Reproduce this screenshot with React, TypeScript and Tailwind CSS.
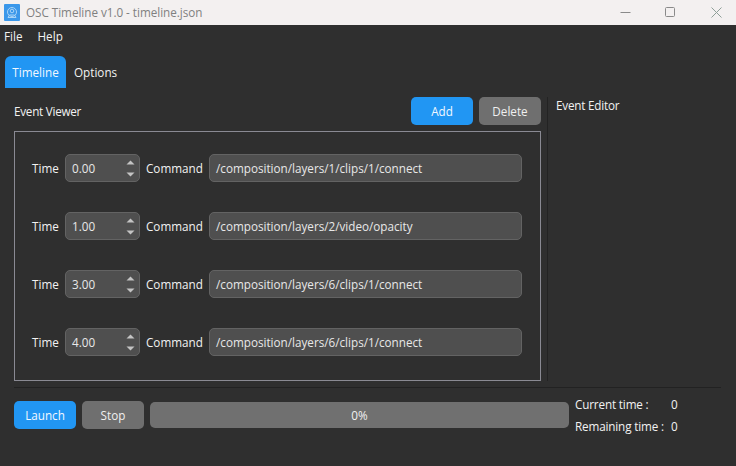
const events = [
  { time: "0.00", command: "/composition/layers/1/clips/1/connect" },
  { time: "1.00", command: "/composition/layers/2/video/opacity" },
  { time: "3.00", command: "/composition/layers/6/clips/1/connect" },
  { time: "4.00", command: "/composition/layers/6/clips/1/connect" },
];

const EventRow = ({ time, command }: { time: string; command: string }) => (
  <div className="flex h-[28px] items-center">
    <span className="mt-[2px] w-[33px]">Time</span>
    <div className="flex h-[28px] w-[75px] items-center justify-between rounded-[5px] border border-[#636363] bg-[#4f4f4f] pl-[6px] pr-[4px] text-[#e8e8e8]">
      <span className="mt-[2px]">{time}</span>
      <div className="flex flex-col gap-[7px]">
        <svg width="9" height="5" viewBox="0 0 9 5">
          <path d="M4.5 0.5 L8.5 4.5 H0.5 Z" fill="#c4c4c4" />
        </svg>
        <svg width="9" height="5" viewBox="0 0 9 5">
          <path d="M0.5 0.5 H8.5 L4.5 4.5 Z" fill="#c4c4c4" />
        </svg>
      </div>
    </div>
    <span className="ml-[6px] mt-[2px] w-[63px]">Command</span>
    <div className="flex h-[28px] w-[313px] items-center rounded-[5px] border border-[#636363] bg-[#4f4f4f] pl-[6px] text-[#e8e8e8]">
      <span className="mt-[2px]">{command}</span>
    </div>
  </div>
);

const ActionButton = ({ label, primary }: { label: string; primary?: boolean }) => (
  <button
    className={`flex h-[28px] w-[62px] items-center justify-center rounded-[5px] pt-[2px] ${
      primary ? "bg-[#2196f3] text-[#f2f8ff]" : "bg-[#6f6f6f] text-[#f0f0f0]"
    }`}
  >
    {label}
  </button>
);

export default function App() {
  return (
    <div
      className="flex h-[466px] w-[736px] flex-col overflow-hidden bg-[#2f2f2f] text-[11.7px] text-[#f2f2f2]"
      style={{ fontFamily: '"Open Sans", "Noto Sans", sans-serif' }}
    >
      {/* title bar */}
      <div className="flex h-[25px] items-center bg-[#f3f0f0] pl-[4px]">
        <div className="flex h-[17px] w-[16px] items-center justify-center rounded-[1px] bg-[#3a97ea]">
          <svg width="14" height="14" viewBox="0 0 14 14" fill="none" stroke="#a9d4f7" strokeWidth="1">
            <circle cx="7" cy="6" r="4.5" />
            <circle cx="7" cy="5" r="1.8" />
            <path d="M3 11.5 H11 L9.5 9 H4.5 Z" />
          </svg>
        </div>
        <span className="ml-[6px] tracking-[-0.03px] text-[#808080]">OSC Timeline v1.0 - timeline.json</span>
        <div className="ml-auto flex items-center">
          <svg width="11" height="11" viewBox="0 0 11 11" className="mr-[34px]">
            <path d="M0.5 5.5 H10.5" stroke="#8a8a8a" />
          </svg>
          <svg width="11" height="11" viewBox="0 0 11 11" className="mr-[35px]">
            <rect x="0.5" y="0.5" width="9" height="9" rx="1" fill="none" stroke="#8a8a8a" />
          </svg>
          <svg width="11" height="11" viewBox="0 0 11 11" className="mr-[14px]">
            <path d="M0.5 0.5 L10.5 10.5 M10.5 0.5 L0.5 10.5" stroke="#8f9f98" />
          </svg>
        </div>
      </div>

      {/* menu bar */}
      <div className="flex h-[24px] items-center gap-[15px] pl-[4px]">
        <span>File</span>
        <span>Help</span>
      </div>

      {/* tabs */}
      <div className="mt-[7px] flex h-[32px] pl-[5px]">
        <div className="flex w-[61px] items-center justify-center rounded-t-[6px] bg-[#2196f3] pt-[2px] text-[#f2f8ff]">
          Timeline
        </div>
        <div className="ml-[8px] flex items-center pt-[2px]">Options</div>
      </div>

      {/* main area */}
      <div className="mt-[9px] flex h-[284px] pl-[14px]">
        <div className="flex w-[527px] flex-col">
          <div className="flex h-[28px] items-center justify-between">
            <span className="mt-[2px] tracking-[-0.25px]">Event Viewer</span>
            <div className="flex gap-[6px]">
              <ActionButton label="Add" primary />
              <ActionButton label="Delete" />
            </div>
          </div>
          <div className="mt-[6px] flex h-[250px] flex-col gap-[30px] border border-[#8a8a93] pl-[17px] pt-[22px]">
            {events.map((e, i) => (
              <EventRow key={i} time={e.time} command={e.command} />
            ))}
          </div>
        </div>
        <div className="ml-[6px] w-px bg-[#232323]" />
        <div className="ml-[8px] tracking-[-0.2px]">Event Editor</div>
      </div>

      <div className="ml-[14px] mt-[6px] h-px w-[707px] bg-[#222222]" />

      {/* footer */}
      <div className="ml-[14px] mt-[13px] flex h-[28px] items-center gap-[6px]">
        <ActionButton label="Launch" primary />
        <ActionButton label="Stop" />
        <div className="flex h-[26px] w-[419px] items-center justify-center rounded-[5px] bg-[#707070] pt-[2px] text-[#f0f0f0]">
          0%
        </div>
        <div className="flex flex-col gap-[5px] pt-[2px] tracking-[-0.15px]">
          <div className="flex h-[17px] items-center">
            <span className="w-[96px]">Current time :</span>
            <span>0</span>
          </div>
          <div className="flex h-[17px] items-center">
            <span className="w-[96px]">Remaining time :</span>
            <span>0</span>
          </div>
        </div>
      </div>
    </div>
  );
}
